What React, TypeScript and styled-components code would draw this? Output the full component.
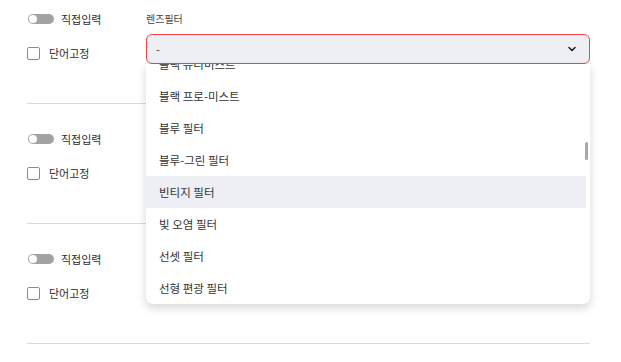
import { useLayoutEffect, useRef, useState } from 'react';
import styled, { createGlobalStyle } from 'styled-components';
import { ChevronDown } from 'lucide-react';

const GlobalStyle = createGlobalStyle`
  body {
    margin: 0;
    background: #fff;
    font-family: 'Noto Sans CJK KR', 'Noto Sans', sans-serif;
    color: #333;
  }
`;

const Page = styled.div`
  padding: 0 31px 0 27px;
`;

const Block = styled.section`
  display: grid;
  grid-template-columns: 119px 1fr;
  align-items: start;
  padding: 26px 0 39px;
  border-bottom: 1px solid #dcdcdf;

  &:first-child {
    padding-top: 10px;
  }
`;

const Options = styled.div`
  display: flex;
  flex-direction: column;
  gap: 16px;
`;

const OptionRow = styled.label`
  display: flex;
  align-items: center;
  height: 18px;
  font-size: 11px;
  color: #2c2c2c;
  gap: 7px;
`;

const Toggle = styled.span<{ $on?: boolean }>`
  position: relative;
  width: 26px;
  height: 10px;
  margin-left: 1px;
  border-radius: 5px;
  background: ${p => (p.$on ? '#4a7cf0' : '#a3a3a6')};

  &::after {
    content: '';
    position: absolute;
    top: 1px;
    left: ${p => (p.$on ? '17px' : '1px')};
    width: 8px;
    height: 8px;
    border-radius: 50%;
    background: #fff;
  }
`;

const Checkbox = styled.span`
  width: 11px;
  height: 11px;
  margin-right: 2px;
  border: 1px solid #8c8c8c;
  border-radius: 2px;
  background: #fff;
`;

const Field = styled.div`
  position: relative;
  display: flex;
  flex-direction: column;
`;

const FieldLabel = styled.div`
  height: 18px;
  line-height: 18px;
  font-size: 10px;
  color: #444;
`;

const Select = styled.div<{ $open?: boolean }>`
  box-sizing: border-box;
  margin-top: 6px;
  height: 30px;
  display: flex;
  align-items: center;
  justify-content: space-between;
  padding: 0 11px 0 9px;
  font-size: 11px;
  color: #333;
  background: #eeeff4;
  border: 1px solid ${p => (p.$open ? '#f04545' : '#d6d7dc')};
  border-radius: 6px;
`;

const MenuWrap = styled.div`
  position: absolute;
  top: 100%;
  left: 0;
  right: 0;
  z-index: 10;
  height: 240px;
  background: #fff;
  border-radius: 0 0 6px 6px;
  box-shadow: 0 4px 10px rgba(0, 0, 0, 0.16);
  overflow: hidden;
`;

const Menu = styled.ul`
  margin: 0;
  padding: 0;
  list-style: none;
  height: 100%;
  overflow-y: auto;
  scrollbar-width: none;

  &::-webkit-scrollbar {
    display: none;
  }
`;

const ScrollThumb = styled.div`
  position: absolute;
  right: 2px;
  width: 3px;
  border-radius: 2px;
  background: #a8a8aa;
`;

const MenuItem = styled.li<{ $active?: boolean }>`
  height: 32px;
  display: flex;
  align-items: center;
  margin-right: 4px;
  padding-left: 13px;
  font-size: 11.5px;
  color: #333;
  background: ${p => (p.$active ? '#eeeff4' : 'transparent')};
`;

const ITEM_H = 32;
const MENU_H = 240;

const LENS_FILTERS = [
  '-', '골드 필터', '골드 리플렉터', '그라데이션 ND 필터', '그라데이션 그레이', '그라데이션 블루',
  '그라데이션 오렌지', '그린 필터', '글리머글래스', '나이트 필터', '내추럴 나이트', '노란 필터',
  '다이크로익 필터', '더블 폴라라이저', '듀얼 컬러 필터', '디퓨전 필터', '라이트 블루 필터', '레드 필터',
  '레드 인핸서', '로우 콘트라스트', '마젠타 필터', '멀티 코팅 UV', '모노크롬 필터', '미스트 필터',
  '미스트 필터 1/4', '미스트 필터 1/8', '바이올렛 필터', '반사 방지 필터', '별빛 필터', '보호 필터',
  '블랙 미스트', '블랙 새틴', '블랙 퓨리미스트', '블랙 프로-미스트', '블루 필터', '블루-그린 필터',
  '빈티지 필터', '빛 오염 필터', '선셋 필터', '선형 편광 필터', '소프트 포커스', '소프트 필터',
  '스타 필터 4선', '스타 필터 6선', '스타 필터 8선', '스트릭 필터', '스카이라이트 필터', '시네마 필터',
  '실버 필터', '안개 효과 필터', '앰버 필터', '업라이트 필터', '에메랄드 필터', '오렌지 필터',
  '온도 보정 필터', '옐로 필터', '워터 필터', '웜 톤 필터', '원형 편광 필터', '이펙트 필터',
  '인프라레드 필터', '자외선 차단 필터', '적외선 720nm', '적외선 850nm', 'ND2 필터', 'ND4 필터',
  'ND8 필터', 'ND16 필터', 'ND32 필터', 'ND64 필터', 'ND1000 필터', '청색 보정 필터',
  '쿨 톤 필터', '컬러 그라데이션', '컬러 보정 필터', '코랄 필터', '클로즈업 +1', '클로즈업 +2',
  '클로즈업 +4', '클리어 필터', '탠저린 필터', '틸 필터', '파스텔 필터', '퍼플 필터',
  '페어리 필터', '포그 필터', '프리즘 필터', '플레어 필터', '핑크 필터', '하프 ND 필터',
  '하프 컬러 필터', '할로 필터', '핫 미러 필터', '헤이즈 필터', '형광등 보정 필터', '화이트 미스트',
  '화이트 프로-미스트', '황색 필터', '흑백 대비 필터', '흐림 효과 필터',
];

const INITIAL_SCROLL = LENS_FILTERS.indexOf('블랙 퓨리미스트') * ITEM_H + 16;

const FilterSelect = ({ open }: { open?: boolean }) => {
  const menuRef = useRef<HTMLUListElement>(null);
  const [scrollTop, setScrollTop] = useState(INITIAL_SCROLL);

  useLayoutEffect(() => {
    if (menuRef.current) menuRef.current.scrollTop = INITIAL_SCROLL;
  }, [open]);

  const contentH = LENS_FILTERS.length * ITEM_H;
  const thumbH = Math.max(18, (MENU_H * MENU_H) / contentH);
  const thumbTop = (scrollTop / (contentH - MENU_H)) * (MENU_H - thumbH);

  return (
    <Field>
      <FieldLabel>렌즈필터</FieldLabel>
      <Select $open={open}>
        <span>-</span>
        <ChevronDown size={12} strokeWidth={3.2} color="#222" />
      </Select>
      {open && (
        <MenuWrap>
          <Menu ref={menuRef} onScroll={e => setScrollTop(e.currentTarget.scrollTop)}>
            {LENS_FILTERS.map(name => (
              <MenuItem key={name} $active={name === '빈티지 필터'}>
                {name}
              </MenuItem>
            ))}
          </Menu>
          <ScrollThumb style={{ top: thumbTop, height: thumbH }} />
        </MenuWrap>
      )}
    </Field>
  );
};

const EntryBlock = ({ open }: { open?: boolean }) => (
  <Block>
    <Options>
      <OptionRow>
        <Toggle />
        직접입력
      </OptionRow>
      <OptionRow>
        <Checkbox />
        단어고정
      </OptionRow>
    </Options>
    <FilterSelect open={open} />
  </Block>
);

export default function App() {
  return (
    <>
      <GlobalStyle />
      <Page>
        <EntryBlock open />
        <EntryBlock />
        <EntryBlock />
      </Page>
    </>
  );
}
